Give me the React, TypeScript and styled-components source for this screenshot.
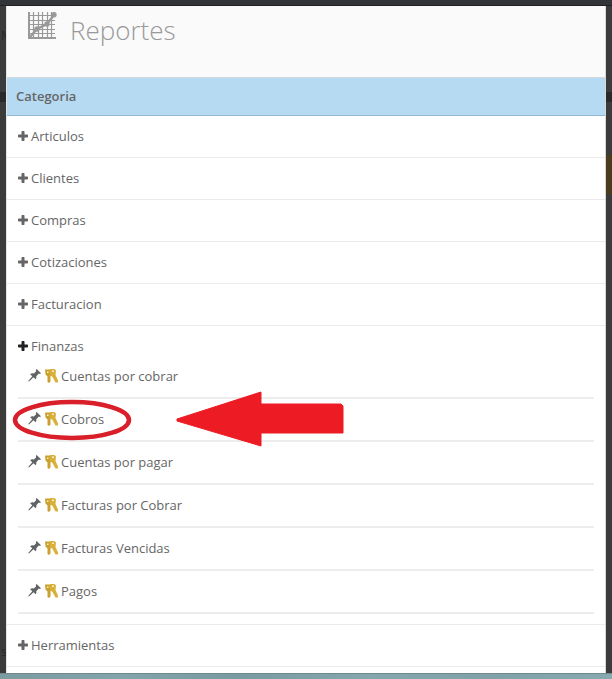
import React from "react";
import styled, { createGlobalStyle } from "styled-components";

const GlobalStyle = createGlobalStyle`
  * { box-sizing: border-box; }
  body {
    margin: 0;
    background: #3b3b3b;
    color: #666;
    font: 13px/20px "Open Sans", sans-serif;
  }
`;

const Page = styled.div`
  display: flex;
  flex-direction: column;
  min-height: 100vh;
`;

const TopBar = styled.div`
  height: 6px;
  background: #31353a;
  border-bottom: 1px solid #221f22;
`;

const Body = styled.div`
  flex: 1;
  display: grid;
  grid-template-columns: 6px minmax(0, 1fr) 6px;
`;

const Gutter = styled.div`
  display: flex;
  flex-direction: column;
  overflow: hidden;
  background: #3b3b3b;
  color: #282828;
`;

const Block = styled.div<{ $height: number; $tone?: string }>`
  height: ${(p) => p.$height}px;
  flex: none;
  background: ${(p) => p.$tone ?? "transparent"};
`;

const Peek = styled.span`
  flex: none;
  height: 20px;
  padding-left: 1px;
  overflow: hidden;
`;

const Panel = styled.main`
  background: #fff;
  border-left: 1px solid #e4e4e4;
  border-right: 1px solid #d8d8d8;
`;

const Header = styled.header`
  display: flex;
  align-items: flex-start;
  gap: 13px;
  height: 72px;
  padding: 6px 21px 0;
  background: #fafafa;
  border-bottom: 1px solid #d3dade;
  color: #999;
`;

const Title = styled.h1`
  margin: 0;
  font-size: 26px;
  line-height: 36px;
  font-weight: 300;
`;

const CategoryHead = styled.h2`
  margin: 0;
  height: 38px;
  padding: 0 9px;
  background: #b5daf2;
  border-bottom: 1px solid #8fb9d6;
  font-size: 13px;
  line-height: 37px;
  font-weight: 600;
`;

const List = styled.ul`
  margin: 0;
  padding: 0;
  list-style: none;
`;

const Category = styled.li<{ $open: boolean }>`
  padding: 10px 11px ${(p) => (p.$open ? 10 : 11)}px;
  border-bottom: 1px solid #ebebeb;
`;

const Toggle = styled.button<{ $open: boolean }>`
  display: flex;
  align-items: center;
  gap: 2px;
  padding: 0;
  border: 0;
  background: none;
  color: #666;
  font: inherit;
  cursor: pointer;

  svg { color: ${(p) => (p.$open ? "#222" : "#666")}; }
`;

const Reports = styled(List)`
  position: relative;
`;

const Report = styled.li`
  height: 43px;
  padding: 10px 10px 0;
  border-bottom: 2px solid #ededed;
`;

const ReportLink = styled.a`
  display: inline-flex;
  align-items: center;
  gap: 3px;
  color: #666;
  text-decoration: none;
`;

const Marker = styled.svg`
  position: absolute;
  top: 33px;
  left: -8px;
  pointer-events: none;
`;

const Footer = styled.footer`
  height: 6px;
  background: linear-gradient(90deg, #7b9ba1, #82a4ab 20%, #789aa1 38%, #84a7ae 60%, #80a1a8 80%, #87a9b0);
  border-top: 1px solid #71888d;
`;

const ChartIcon = () => (
  <svg width="29" height="28" viewBox="0 0 29 28" fill="none" stroke="#999" aria-hidden="true">
    <path d="M1 0v27" strokeWidth="2" />
    <path d="M0 26H28" strokeWidth="2" />
    <path d="M5.500 0v26M10.500 0v26M14.500 0v26M19.500 0v26M23.500 0v26M2 3.500h25M2 8.500h25M2 12.500h25M2 17.500h25M2 21.500h25" strokeWidth="1.200" />
    <path d="M2 25L9 17L19 12L26 3" strokeWidth="2.400" />
    <g fill="#999" stroke="none">
      <circle cx="9" cy="17" r="2.700" />
      <circle cx="19" cy="12" r="2.700" />
      <circle cx="26" cy="2.700" r="2.700" />
    </g>
  </svg>
);

const PlusIcon = () => (
  <svg width="11" height="10" viewBox="0 0 11 10" fill="currentColor" aria-hidden="true">
    <path d="M4.200 0H5.800Q6.500 0 6.500 .7V3.500H9.300Q10 3.500 10 4.200V5.800Q10 6.500 9.300 6.500H6.500V9.300Q6.500 10 5.800 10H4.200Q3.500 10 3.500 9.300V6.500H.7Q0 6.500 0 5.800V4.200Q0 3.500.7 3.500H3.500V.7Q3.500 0 4.200 0Z" />
  </svg>
);

const PinIcon = () => (
  <svg width="14" height="14" viewBox="0 0 14 14" fill="#606364" aria-hidden="true">
    <path d="M8.600 0L13 4.200L12 5L10.800 4.600L8.300 7.200Q8.800 9.200 7.600 10.300L5.500 8.300L1 12.500L.2 12L4.300 7.300L2.100 5.200Q3.900 3.800 5.900 4.600L8.200 2.200L7.800 1Z" />
  </svg>
);

const KeysIcon = () => (
  <svg width="13" height="14" viewBox="0 0 13 14" aria-hidden="true">
    <path d="M0 .5H5.500L7 5L5.500 7V12.500L4 14L2.500 13V7.500L.5 5.500Z" fill="#caa12f" />
    <path d="M5 0H9.500L11 1.500L10.500 6L13 11.500V13.500H10.500L7.500 8L5 6L4.500 2Z" fill="#dbb03a" />
    <rect x="2" y="2.500" width="1.500" height="1.500" fill="#f7edcc" />
    <rect x="7" y="1.500" width="2" height="1.500" fill="#f7edcc" />
  </svg>
);

const reports = [
  "Cuentas por cobrar",
  "Cobros",
  "Cuentas por pagar",
  "Facturas por Cobrar",
  "Facturas Vencidas",
  "Pagos",
];

const categories: { name: string; reports?: string[] }[] = [
  { name: "Articulos" },
  { name: "Clientes" },
  { name: "Compras" },
  { name: "Cotizaciones" },
  { name: "Facturacion" },
  { name: "Finanzas", reports },
  { name: "Herramientas" },
];

const Highlight = () => (
  <Marker width="340" height="60" viewBox="0 0 340 60" aria-hidden="true">
    <ellipse cx="62" cy="31" rx="57" ry="18" fill="none" stroke="#d91f2a" strokeWidth="4.500" />
    <path d="M167 30L251 3V15H331L333 17V44H251V57L167 32Z" fill="#ed1c24" stroke="#ed1c24" strokeLinejoin="round" />
  </Marker>
);

export default function App() {
  return (
    <>
      <GlobalStyle />
      <Page>
        <TopBar />
        <Body>
          <Gutter aria-hidden="true">
            <Block $height={19} />
            <Peek>M</Peek>
            <Block $height={47} />
            <Block $height={10} $tone="#292929" />
            <Block $height={539} />
            <Peek>s</Peek>
          </Gutter>
          <Panel>
            <Header>
              <ChartIcon />
              <Title>Reportes</Title>
            </Header>
            <CategoryHead>Categoria</CategoryHead>
            <List>
              {categories.map((category) => (
                <Category key={category.name} $open={!!category.reports}>
                  <Toggle type="button" $open={!!category.reports} aria-expanded={!!category.reports}>
                    <PlusIcon />
                    {category.name}
                  </Toggle>
                  {category.reports && (
                    <Reports>
                      {category.reports.map((name) => (
                        <Report key={name}>
                          <ReportLink href="#">
                            <PinIcon />
                            <KeysIcon />
                            {name}
                          </ReportLink>
                        </Report>
                      ))}
                      <Highlight />
                    </Reports>
                  )}
                </Category>
              ))}
            </List>
          </Panel>
          <Gutter aria-hidden="true">
            <Block $height={86} />
            <Block $height={10} $tone="#292929" />
            <Block $height={53} />
            <Block $height={39} $tone="#4a3c1c" />
          </Gutter>
        </Body>
        <Footer />
      </Page>
    </>
  );
}
